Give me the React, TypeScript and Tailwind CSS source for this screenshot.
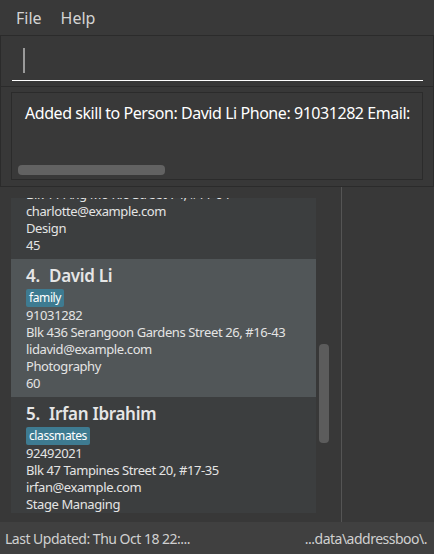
import React from "react";

type Person = {
  idx: number;
  name: string;
  tag: string;
  phone: string;
  address: string;
  email: string;
  skill: string;
  num: string;
};

const people: Person[] = [
  {
    idx: 3,
    name: "Charlotte Oliveiro",
    tag: "neighbours",
    phone: "93210283",
    address: "Blk 11 Ang Mo Kio Street 74, #11-04",
    email: "charlotte@example.com",
    skill: "Design",
    num: "45",
  },
  {
    idx: 4,
    name: "David Li",
    tag: "family",
    phone: "91031282",
    address: "Blk 436 Serangoon Gardens Street 26, #16-43",
    email: "lidavid@example.com",
    skill: "Photography",
    num: "60",
  },
  {
    idx: 5,
    name: "Irfan Ibrahim",
    tag: "classmates",
    phone: "92492021",
    address: "Blk 47 Tampines Street 20, #17-35",
    email: "irfan@example.com",
    skill: "Stage Managing",
    num: "28",
  },
];

function Card({ p, selected }: { p: Person; selected: boolean }) {
  return (
    <div
      className={
        "h-[138px] shrink-0 pl-[15px] pt-[6px] " +
        (selected ? "bg-[#515658]" : "bg-[#3c3e3f]")
      }
    >
      <div className="flex h-[22px] items-center text-[17px] leading-[22px] font-semibold tracking-[-0.3px] text-[#e6e6e6] whitespace-nowrap">
        <span className="w-[23px]">{p.idx}.</span>
        <span>{p.name}</span>
      </div>
      <div className="mt-[2px] flex h-[18px]">
        <span className="h-[18px] rounded-[2px] bg-[#3e7b91] px-[3px] text-[12px] leading-[18px] tracking-[-0.4px] text-white">
          {p.tag}
        </span>
      </div>
      <div className="text-[13px] leading-[17px] tracking-[-0.4px] text-[#e4e4e4] whitespace-nowrap">
        <div>{p.phone}</div>
        <div>{p.address}</div>
        <div>{p.email}</div>
        <div>{p.skill}</div>
        <div>{p.num}</div>
      </div>
    </div>
  );
}

export default function App() {
  return (
    <div
      className="flex h-[554px] w-[434px] flex-col overflow-hidden bg-[#383838]"
      style={{ fontFamily: '"Noto Sans", "Open Sans", sans-serif' }}
    >
      {/* Menu bar */}
      <div className="flex h-[36px] shrink-0 items-center gap-[19px] border-b border-[#2b2b2b] bg-[#393939] pl-[16px] text-[16px] text-[#d4d4d4]">
        <span>File</span>
        <span>Help</span>
      </div>

      {/* Command box */}
      <div className="flex h-[51px] shrink-0 items-start border-x border-b border-[#2b2b2b] pl-[11px] pr-[10px] pt-[12px]">
        <div className="flex h-[33px] w-full items-start border-b border-white pl-[11px]">
          <div className="h-[25px] w-[2px] bg-[#9a9a9a]" />
        </div>
      </div>

      {/* Result display */}
      <div className="h-[100px] shrink-0 border-x border-b border-[#2b2b2b] pl-[10px] pr-[10px] pt-[5px]">
        <div className="relative h-[88px] w-full overflow-hidden border border-[#2b2b2b] bg-[#393939]">
          <div className="whitespace-nowrap pl-[13px] pt-[9px] text-[16px] leading-[22px] tracking-[-0.45px] text-white">
            Added skill to Person: David Li Phone: 91031282 Email:
          </div>
          <div className="absolute left-[6px] top-[72px] h-[10px] w-[147px] rounded-[4px] bg-[#626262]" />
        </div>
      </div>

      {/* List area */}
      <div className="flex h-[335px] shrink-0">
        <div className="relative flex h-full w-[341px] shrink-0 pl-[11px] pt-[11px] pb-[9px]">
          <div className="flex h-full w-[305px] flex-col overflow-hidden">
            <div className="mt-[-77px] flex flex-col">
              {people.map((p) => (
                <Card key={p.idx} p={p} selected={p.idx === 4} />
              ))}
            </div>
          </div>
          <div className="absolute left-[319px] top-[157px] h-[99px] w-[10px] rounded-[4px] bg-[#5c5c5c]" />
        </div>
        <div className="h-full w-px bg-[#555555]" />
        <div className="flex-1" />
      </div>

      {/* Status bar */}
      <div className="flex h-[32px] shrink-0 items-center justify-between bg-[#404040] pl-[5px] pr-[7px] text-[14px] tracking-[-0.5px] text-[#d0d0d0] whitespace-nowrap">
        <span>Last Updated: Thu Oct 18 22:...</span>
        <span>...data\addressboo\.</span>
      </div>
    </div>
  );
}
